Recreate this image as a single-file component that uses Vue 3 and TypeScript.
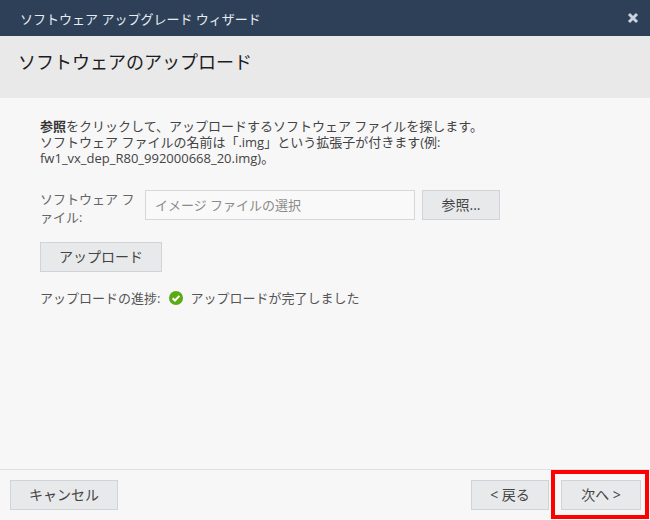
<script setup lang="ts">
const title = 'ソフトウェア アップグレード ウィザード'
</script>

<template>
  <div class="dialog">
    <div class="titlebar">
      <span class="title">{{ title }}</span>
      <svg class="close" width="12" height="12" viewBox="0 0 12 12"><path d="M2 2 L10 10 M10 2 L2 10" stroke="#c9d3e0" stroke-width="3" fill="none" /></svg>
    </div>
    <div class="header">ソフトウェアのアップロード</div>
    <div class="body">
      <p class="intro"><b>参照</b>をクリックして、アップロードするソフトウェア ファイルを探します。<br />ソフトウェア ファイルの名前は「.img」という拡張子が付きます(例:<br />fw1_vx_dep_R80_992000668_20.img)。</p>
      <div class="file-row">
        <label class="file-label">ソフトウェア ファイル:</label>
        <div class="file-input">イメージ ファイルの選択</div>
        <button class="btn browse">参照...</button>
      </div>
      <button class="btn upload">アップロード</button>
      <div class="progress">
        <span>アップロードの進捗:</span>
        <svg class="ok" width="14" height="14" viewBox="0 0 14 14"><circle cx="7" cy="7" r="7" fill="#5aaa14" /><path d="M3.6 7.2 L6 9.5 L10.4 4.9" stroke="#fff" stroke-width="2" fill="none" /></svg>
        <span>アップロードが完了しました</span>
      </div>
    </div>
    <div class="footer">
      <button class="btn cancel">キャンセル</button>
      <div class="nav">
        <button class="btn back">&lt; 戻る</button>
        <button class="btn next">次へ &gt;<span class="highlight"></span></button>
      </div>
    </div>
  </div>
</template>

<style>
html, body { margin: 0; padding: 0; }
</style>

<style scoped>
.dialog {
  width: 650px;
  height: 520px;
  display: flex;
  flex-direction: column;
  background: #f7f7f7;
  font-family: "Open Sans", "Noto Sans CJK JP", sans-serif;
  font-size: 13px;
  color: #555;
  overflow: hidden;
}
.titlebar {
  height: 36px;
  flex: none;
  background: #2e4058;
  color: #e6ecf2;
  font-size: 13px;
  display: flex;
  align-items: center;
  justify-content: space-between;
  padding: 0 11px 0 20px;
  box-sizing: border-box;
}
.close { margin-top: -1px; }
.header {
  height: 62px;
  flex: none;
  background: #e9e9e9;
  color: #1c1c1c;
  font-size: 18px;
  line-height: 24px;
  padding: 14px 0 0 18px;
  box-sizing: border-box;
}
.body {
  flex: 1;
  padding: 20px 40px 0;
  box-sizing: border-box;
  display: flex;
  flex-direction: column;
  align-items: flex-start;
}
.intro {
  margin: 0;
  line-height: 16px;
  color: #444;
}
.intro b { color: #333; }
.file-row {
  display: flex;
  align-items: flex-start;
  margin-top: 24px;
}
.file-label {
  width: 105px;
  line-height: 18px;
  color: #666;
}
.file-input {
  width: 270px;
  height: 30px;
  box-sizing: border-box;
  border: 1px solid #d4d7dc;
  background: #f9f9f9;
  color: #8a8a8a;
  font-size: 13px;
  line-height: 28px;
  padding-left: 9px;
}
.btn {
  height: 30px;
  box-sizing: border-box;
  border: 1px solid #d0d3d8;
  background: #e8e9eb;
  color: #444;
  font-family: inherit;
  font-size: 14px;
  padding: 0 0 2px;
  position: relative;
}
.browse { width: 78px; margin-left: 7px; }
.upload { width: 122px; margin-top: 16px; }
.progress {
  display: flex;
  align-items: center;
  margin-top: 16px;
  color: #555;
}
.ok { margin: 0 7px 0 9px; }
.footer {
  height: 51px;
  flex: none;
  border-top: 1px solid #e0e0e2;
  box-sizing: border-box;
  display: flex;
  justify-content: space-between;
  padding: 10px 9px 0 10px;
}
.cancel { width: 108px; }
.nav { display: flex; gap: 12px; }
.back { width: 78px; }
.next { width: 80px; }
.highlight {
  position: absolute;
  left: -11px;
  top: -11px;
  width: 98px;
  height: 49px;
  box-sizing: border-box;
  border: 4px solid #f00;
}
</style>
